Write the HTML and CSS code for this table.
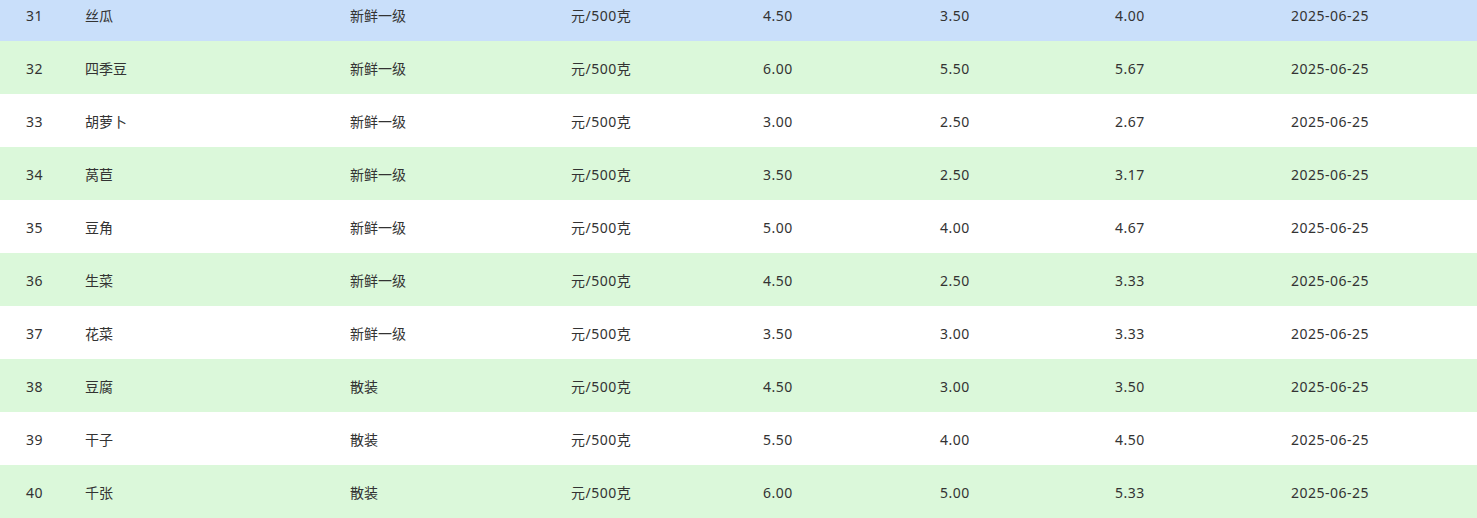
FILE: index.html
```html
<!DOCTYPE html>
<html lang="zh">
<head>
<meta charset="utf-8">
<link rel="stylesheet" href="styles.css">
</head>
<body>
<div class="table">
  <div class="row selected"><span>31</span><span>丝瓜</span><span>新鲜一级</span><span>元/500克</span><span>4.50</span><span>3.50</span><span>4.00</span><span>2025-06-25</span></div>
  <div class="row green"><span>32</span><span>四季豆</span><span>新鲜一级</span><span>元/500克</span><span>6.00</span><span>5.50</span><span>5.67</span><span>2025-06-25</span></div>
  <div class="row"><span>33</span><span>胡萝卜</span><span>新鲜一级</span><span>元/500克</span><span>3.00</span><span>2.50</span><span>2.67</span><span>2025-06-25</span></div>
  <div class="row green"><span>34</span><span>莴苣</span><span>新鲜一级</span><span>元/500克</span><span>3.50</span><span>2.50</span><span>3.17</span><span>2025-06-25</span></div>
  <div class="row"><span>35</span><span>豆角</span><span>新鲜一级</span><span>元/500克</span><span>5.00</span><span>4.00</span><span>4.67</span><span>2025-06-25</span></div>
  <div class="row green"><span>36</span><span>生菜</span><span>新鲜一级</span><span>元/500克</span><span>4.50</span><span>2.50</span><span>3.33</span><span>2025-06-25</span></div>
  <div class="row"><span>37</span><span>花菜</span><span>新鲜一级</span><span>元/500克</span><span>3.50</span><span>3.00</span><span>3.33</span><span>2025-06-25</span></div>
  <div class="row green"><span>38</span><span>豆腐</span><span>散装</span><span>元/500克</span><span>4.50</span><span>3.00</span><span>3.50</span><span>2025-06-25</span></div>
  <div class="row"><span>39</span><span>干子</span><span>散装</span><span>元/500克</span><span>5.50</span><span>4.00</span><span>4.50</span><span>2025-06-25</span></div>
  <div class="row green"><span>40</span><span>千张</span><span>散装</span><span>元/500克</span><span>6.00</span><span>5.00</span><span>5.33</span><span>2025-06-25</span></div>
</div>
</body>
</html>
```

FILE: styles.css
```css
html, body {
  margin: 0;
  padding: 0;
  background: #ffffff;
  overflow: hidden;
}
.table {
  margin-top: -12px;
  font-family: "Noto Sans", "Noto Sans CJK SC", sans-serif;
  font-size: 14px;
  color: #333333;
}
.row {
  display: grid;
  grid-template-columns: 59px 265px 221px 192px 177px 175px 176px 1fr;
  align-items: center;
  height: 53px;
  padding-left: 26px;
  background: #ffffff;
}
.row.green {
  background: #dbf8da;
}
.row.selected {
  background: #c9dffa;
}
.row span {
  white-space: nowrap;
  line-height: 20px;
  padding-top: 2px;
}
.row span:nth-child(1),
.row span:nth-child(4),
.row span:nth-child(5),
.row span:nth-child(6),
.row span:nth-child(7),
.row span:nth-child(8) {
  letter-spacing: 0.5px;
}
```
